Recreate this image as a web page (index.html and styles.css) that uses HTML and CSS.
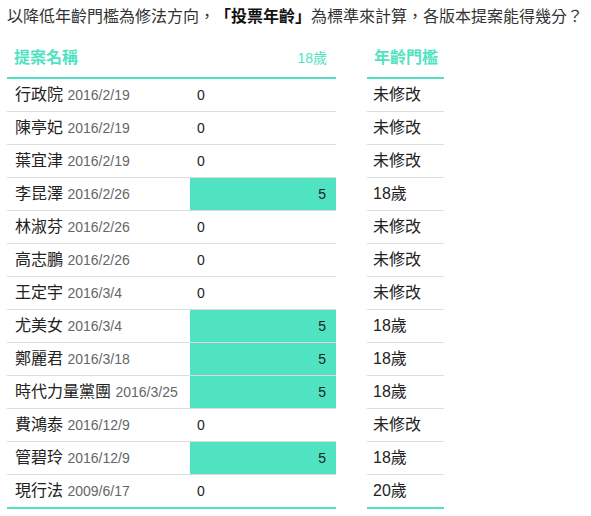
FILE: index.html
```html
<!DOCTYPE html>
<html lang="zh-Hant">
<head>
<meta charset="utf-8">
<link rel="stylesheet" href="styles.css">
</head>
<body>
<p class="title">以降低年齡門檻為修法方向，<b>「投票年齡」</b>為標準來計算，各版本提案能得幾分？</p>
<div class="tables">
  <div class="tbl main">
    <div class="head">
      <span class="h-name">提案名稱</span>
      <span class="h-col">18歲</span>
    </div>
    <div class="row"><div class="name">行政院 <span class="date">2016/2/19</span></div><div class="cell">0</div></div>
    <div class="row"><div class="name">陳亭妃 <span class="date">2016/2/19</span></div><div class="cell">0</div></div>
    <div class="row"><div class="name">葉宜津 <span class="date">2016/2/19</span></div><div class="cell">0</div></div>
    <div class="row"><div class="name">李昆澤 <span class="date">2016/2/26</span></div><div class="cell"><div class="bar" style="width:100%">5</div></div></div>
    <div class="row"><div class="name">林淑芬 <span class="date">2016/2/26</span></div><div class="cell">0</div></div>
    <div class="row"><div class="name">高志鵬 <span class="date">2016/2/26</span></div><div class="cell">0</div></div>
    <div class="row"><div class="name">王定宇 <span class="date">2016/3/4</span></div><div class="cell">0</div></div>
    <div class="row"><div class="name">尤美女 <span class="date">2016/3/4</span></div><div class="cell"><div class="bar" style="width:100%">5</div></div></div>
    <div class="row"><div class="name">鄭麗君 <span class="date">2016/3/18</span></div><div class="cell"><div class="bar" style="width:100%">5</div></div></div>
    <div class="row"><div class="name">時代力量黨團 <span class="date">2016/3/25</span></div><div class="cell"><div class="bar" style="width:100%">5</div></div></div>
    <div class="row"><div class="name">費鴻泰 <span class="date">2016/12/9</span></div><div class="cell">0</div></div>
    <div class="row"><div class="name">管碧玲 <span class="date">2016/12/9</span></div><div class="cell"><div class="bar" style="width:100%">5</div></div></div>
    <div class="row"><div class="name">現行法 <span class="date">2009/6/17</span></div><div class="cell">0</div></div>
  </div>
  <div class="tbl side">
    <div class="head"><span class="h-name">年齡門檻</span></div>
    <div class="row"><div class="val">未修改</div></div>
    <div class="row"><div class="val">未修改</div></div>
    <div class="row"><div class="val">未修改</div></div>
    <div class="row"><div class="val">18歲</div></div>
    <div class="row"><div class="val">未修改</div></div>
    <div class="row"><div class="val">未修改</div></div>
    <div class="row"><div class="val">未修改</div></div>
    <div class="row"><div class="val">18歲</div></div>
    <div class="row"><div class="val">18歲</div></div>
    <div class="row"><div class="val">18歲</div></div>
    <div class="row"><div class="val">未修改</div></div>
    <div class="row"><div class="val">18歲</div></div>
    <div class="row"><div class="val">20歲</div></div>
  </div>
</div>
</body>
</html>
```
FILE: styles.css
```css
html, body {
  margin: 0;
  padding: 0;
  background: #fff;
}
body {
  font-family: "Liberation Sans", "Noto Sans CJK TC", sans-serif;
  color: #333;
  padding: 0 7px;
  text-spacing-trim: space-all;
}
.title {
  margin: 0;
  padding-top: 5px;
  font-size: 16px;
  line-height: 24px;
  color: #333;
  white-space: nowrap;
  text-spacing-trim: space-all;
}
.title b {
  font-weight: bold;
  color: #111;
}
.tables {
  display: flex;
  gap: 31px;
  margin-top: 17px;
  align-items: flex-start;
}
.tbl {
  border-bottom: 2px solid #50e3c2;
}
.main { width: 329px; }
.side { width: 77px; }
.head {
  display: flex;
  justify-content: space-between;
  align-items: baseline;
  padding: 0 9px 7px 7px;
  height: 24px;
  line-height: 24px;
  border-bottom: 2px solid #50e3c2;
  color: #50e3c2;
  font-weight: bold;
  white-space: nowrap;
}
.h-name { font-size: 16px; }
.h-col { font-size: 14px; font-weight: normal; }
.side .head { padding: 0 0 7px 7px; }
.row {
  display: flex;
  height: 32px;
  border-bottom: 1px solid #ddd;
}
.row:last-child { border-bottom: none; }
.name {
  width: 183px;
  padding-left: 8px;
  box-sizing: border-box;
  font-size: 16px;
  line-height: 32px;
  color: #222;
  white-space: nowrap;
}
.date {
  font-size: 14px;
  color: #666;
}
.cell {
  flex: 1;
  font-size: 14px;
  line-height: 32px;
  color: #222;
  padding-left: 7px;
  position: relative;
}
.cell .bar {
  position: absolute;
  left: 0;
  top: 0;
  bottom: 0;
  background: #50e3c2;
  text-align: right;
  padding-right: 10px;
  box-sizing: border-box;
}
.val {
  padding-left: 6px;
  font-size: 16px;
  line-height: 32px;
  color: #222;
  white-space: nowrap;
}
```
